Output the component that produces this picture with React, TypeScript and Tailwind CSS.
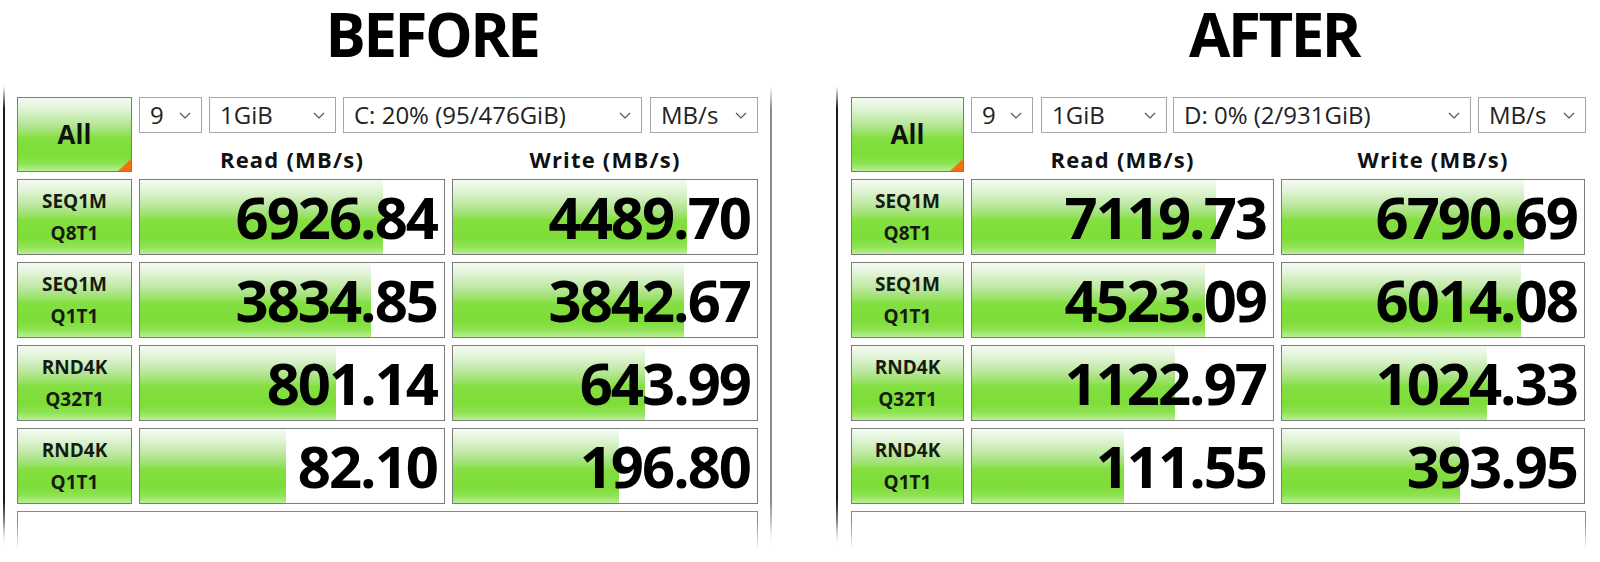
import type { FC } from 'react'

type Row = { top: string; bottom: string; read: string; write: string; readPct: number; writePct: number }

interface BenchProps {
  drive: string
  rows: Row[]
  widths: {
    label: string
    read: string
    write: string
    colGap: string
    combos: [string, string, string, string]
    comboGaps: [string, string, string]
  }
}

// green CrystalDiskMark-style fill
const GREEN =
  'bg-[linear-gradient(to_bottom,#f5fbf2_0%,#e2f4d8_14%,#bfe9a4_32%,#a3e27a_44%,#96e25f_49%,#84df41_54%,#7edd38_78%,#8ee353_90%,#b9f096_100%)]'

const BEFORE: Row[] = [
  { top: 'SEQ1M', bottom: 'Q8T1', read: '6926.84', write: '4489.70', readPct: 80, writePct: 77 },
  { top: 'SEQ1M', bottom: 'Q1T1', read: '3834.85', write: '3842.67', readPct: 76, writePct: 76 },
  { top: 'RND4K', bottom: 'Q32T1', read: '801.14', write: '643.99', readPct: 64.5, writePct: 63 },
  { top: 'RND4K', bottom: 'Q1T1', read: '82.10', write: '196.80', readPct: 48, writePct: 54.5 },
]

const AFTER: Row[] = [
  { top: 'SEQ1M', bottom: 'Q8T1', read: '7119.73', write: '6790.69', readPct: 81, writePct: 80 },
  { top: 'SEQ1M', bottom: 'Q1T1', read: '4523.09', write: '6014.08', readPct: 77.5, writePct: 79 },
  { top: 'RND4K', bottom: 'Q32T1', read: '1122.97', write: '1024.33', readPct: 67.5, writePct: 68 },
  { top: 'RND4K', bottom: 'Q1T1', read: '111.55', write: '393.95', readPct: 50.5, writePct: 59 },
]

const Chevron: FC = () => (
  <svg width="12" height="7" viewBox="0 0 12 7" className="shrink-0">
    <polyline points="1,1 6,6 11,1" fill="none" stroke="#555" strokeWidth="1.2" />
  </svg>
)

const Combo: FC<{ value: string; width: string }> = ({ value, width }) => (
  <div className={`${width} h-[36px] flex items-center justify-between pl-[10px] pr-[10px] bg-white border border-[#a6a6a6] text-[24px] text-[#222] leading-[34px] whitespace-nowrap`}>
    <span>{value}</span>
    <Chevron />
  </div>
)

const ResultCell: FC<{ value: string; pct: number; width: string }> = ({ value, pct, width }) => (
  <div className={`${width} relative h-[76px] border border-[#7c7c7c] bg-white`}>
    <div className={`absolute inset-y-0 left-0 ${GREEN}`} style={{ width: `${pct}%` }} />
    <div className="relative h-full flex items-center justify-end pr-[7px] text-[58px] font-bold tracking-[-2px] text-black leading-[74px]">
      {value}
    </div>
  </div>
)

const Bench: FC<BenchProps> = ({ drive, rows, widths }) => (
  <div className="flex flex-col gap-[7px]">
    {/* top row: All button, combos and column headers */}
    <div className={`flex ${widths.colGap}`}>
      <div className={`${widths.label} relative h-[75px] border border-[#7c7c7c] ${GREEN} flex items-center justify-center text-[26px] font-bold text-[#111]`}>
        All
        <div className="absolute right-0 bottom-0 w-0 h-0 border-l-[13px] border-l-transparent border-b-[12px] border-b-[#f2720c]" />
      </div>
      <div className="flex flex-col">
        <div className="flex">
          <Combo value="9" width={widths.combos[0]} />
          <div className={widths.comboGaps[0]} />
          <Combo value="1GiB" width={widths.combos[1]} />
          <div className={widths.comboGaps[1]} />
          <Combo value={drive} width={widths.combos[2]} />
          <div className={widths.comboGaps[2]} />
          <Combo value="MB/s" width={widths.combos[3]} />
        </div>
        <div className={`flex ${widths.colGap} h-[39px] pt-[13px] items-center text-[22px] font-bold tracking-[1.2px] text-[#111] leading-[30px]`}>
          <div className={`${widths.read} text-center`}>Read (MB/s)</div>
          <div className={`${widths.write} text-center`}>Write (MB/s)</div>
        </div>
      </div>
    </div>

    {rows.map((r, i) => (
      <div key={i} className={`flex ${widths.colGap}`}>
        <div className={`${widths.label} h-[76px] border border-[#7c7c7c] ${GREEN} flex flex-col items-center justify-center text-[19px] font-bold text-[#151a12] leading-[32px]`}>
          <span>{r.top}</span>
          <span>{r.bottom}</span>
        </div>
        <ResultCell value={r.read} pct={r.readPct} width={widths.read} />
        <ResultCell value={r.write} pct={r.writePct} width={widths.write} />
      </div>
    ))}

    {/* comment box */}
    <div className="h-[50px] border border-[#8a8a8a] bg-white" />
  </div>
)

const EdgeLine: FC<{ dark?: boolean }> = ({ dark }) => (
  <div
    className={
      dark
        ? 'w-[2px] self-stretch bg-[linear-gradient(to_bottom,transparent_0%,#1a1a1a_5%,#1a1a1a_90%,transparent_100%)]'
        : 'w-[2px] self-stretch bg-[linear-gradient(to_bottom,transparent_0%,#8c8c8c_5%,#8c8c8c_90%,transparent_100%)]'
    }
  />
)

export default function App() {
  return (
    <div className="relative w-[1600px] h-[562px] bg-white overflow-hidden font-['Open_Sans','Noto_Sans',sans-serif]">
      <div className="flex">
        {/* before */}
        <div className="w-[832px] flex flex-col">
          <div className="h-[86px]">
            <div className="mt-[-7px] ml-[232px] w-[400px] text-center text-[60px] font-bold leading-[82px] tracking-[-2.5px] text-black">
              BEFORE
            </div>
          </div>
          <div className="flex pl-[3px] h-[460px]">
            <EdgeLine dark />
            <div className="pl-[12px] pr-[12px] pt-[11px]">
              <Bench
                drive="C: 20% (95/476GiB)"
                rows={BEFORE}
                widths={{
                  label: 'w-[115px]',
                  read: 'w-[306px]',
                  write: 'w-[306px]',
                  colGap: 'gap-[7px]',
                  combos: ['w-[63px]', 'w-[127px]', 'w-[299px]', 'w-[108px]'],
                  comboGaps: ['w-[7px]', 'w-[7px]', 'w-[8px]'],
                }}
              />
            </div>
            <EdgeLine />
          </div>
        </div>

        {/* after */}
        <div className="w-[768px] flex flex-col">
          <div className="h-[86px]">
            <div className="mt-[-7px] ml-[242px] w-[400px] text-center text-[60px] font-bold leading-[82px] tracking-[-2.5px] text-black">
              AFTER
            </div>
          </div>
          <div className="flex pl-[4px] h-[460px]">
            <EdgeLine dark />
            <div className="pl-[13px] pt-[11px]">
              <Bench
                drive="D: 0% (2/931GiB)"
                rows={AFTER}
                widths={{
                  label: 'w-[113px]',
                  read: 'w-[303px]',
                  write: 'w-[304px]',
                  colGap: 'gap-[7px]',
                  combos: ['w-[62px]', 'w-[126px]', 'w-[298px]', 'w-[108px]'],
                  comboGaps: ['w-[8px]', 'w-[6px]', 'w-[7px]'],
                }}
              />
            </div>
          </div>
        </div>
      </div>

      {/* soft fade along the bottom edge */}
      <div className="absolute left-0 right-0 bottom-0 h-[40px] bg-[linear-gradient(to_bottom,rgba(255,255,255,0)_0%,#ffffff_70%)]" />
    </div>
  )
}
